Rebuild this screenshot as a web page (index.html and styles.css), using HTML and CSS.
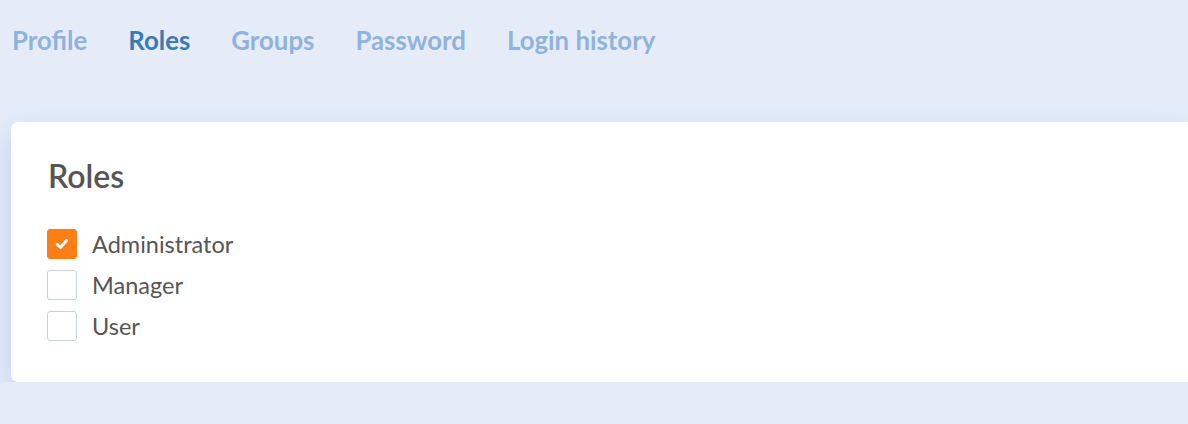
FILE: index.html
```html
<!DOCTYPE html>
<html lang="en">
<head>
    <meta charset="UTF-8">
    <meta name="viewport" content="width=device-width, initial-scale=1.0">
    <title>Account - Roles</title>
    <link rel="stylesheet" href="styles.css">
</head>
<body>
    <div class="page">
        <nav class="tabs">
            <a href="#" class="tab">Profile</a>
            <a href="#" class="tab active">Roles</a>
            <a href="#" class="tab">Groups</a>
            <a href="#" class="tab">Password</a>
            <a href="#" class="tab">Login history</a>
        </nav>

        <div class="card">
            <h2>Roles</h2>
            <div class="checks">
                <label class="check">
                    <span class="box checked">
                        <svg width="16" height="16" viewBox="0 0 16 16"><path d="M3.2 8.4 L6.5 11.4 L12.6 4.6" fill="none" stroke="#fff" stroke-width="3" stroke-linecap="round" stroke-linejoin="round"/></svg>
                    </span>
                    Administrator
                </label>
                <label class="check">
                    <span class="box"></span>
                    Manager
                </label>
                <label class="check">
                    <span class="box"></span>
                    User
                </label>
            </div>
        </div>
    </div>
</body>
</html>
```

FILE: styles.css
```css
body {
    margin: 0;
    padding: 0;
    background-color: #e5ecf8;
    font-family: Lato, "Open Sans", sans-serif;
    overflow: hidden;
}

.page {
    padding: 0 0 0 11px;
}

.tabs {
    display: flex;
    gap: 41px;
    padding: 25px 0 0 1px;
    height: 96px;
    box-sizing: border-box;
}

.tab {
    font-size: 25.8px;
    font-weight: 700;
    color: #8fb3db;
    text-decoration: none;
    line-height: 30px;
}

.tab.active {
    color: #3b7ab5;
}

.card {
    background: white;
    border-radius: 7px 0 0 7px;
    margin-top: 26px;
    height: 260px;
    box-sizing: border-box;
    padding: 34px 36px;
    box-shadow: 0 10px 24px rgba(150, 182, 236, 0.55);
}

h2 {
    margin: 0 0 33px 1px;
    font-size: 32px;
    font-weight: 600;
    color: #555;
    line-height: 40px;
}

.checks {
    display: flex;
    flex-direction: column;
    gap: 11px;
}

.check {
    display: flex;
    align-items: center;
    gap: 15px;
    font-size: 23.5px;
    color: #555;
    height: 30px;
}

.box {
    width: 28px;
    height: 28px;
    border: 1px solid #c8d0dc;
    border-radius: 3px;
    background: white;
    display: flex;
    align-items: center;
    justify-content: center;
}

.box.checked {
    background: #fd7e14;
    border-color: #fd7e14;
}
```
